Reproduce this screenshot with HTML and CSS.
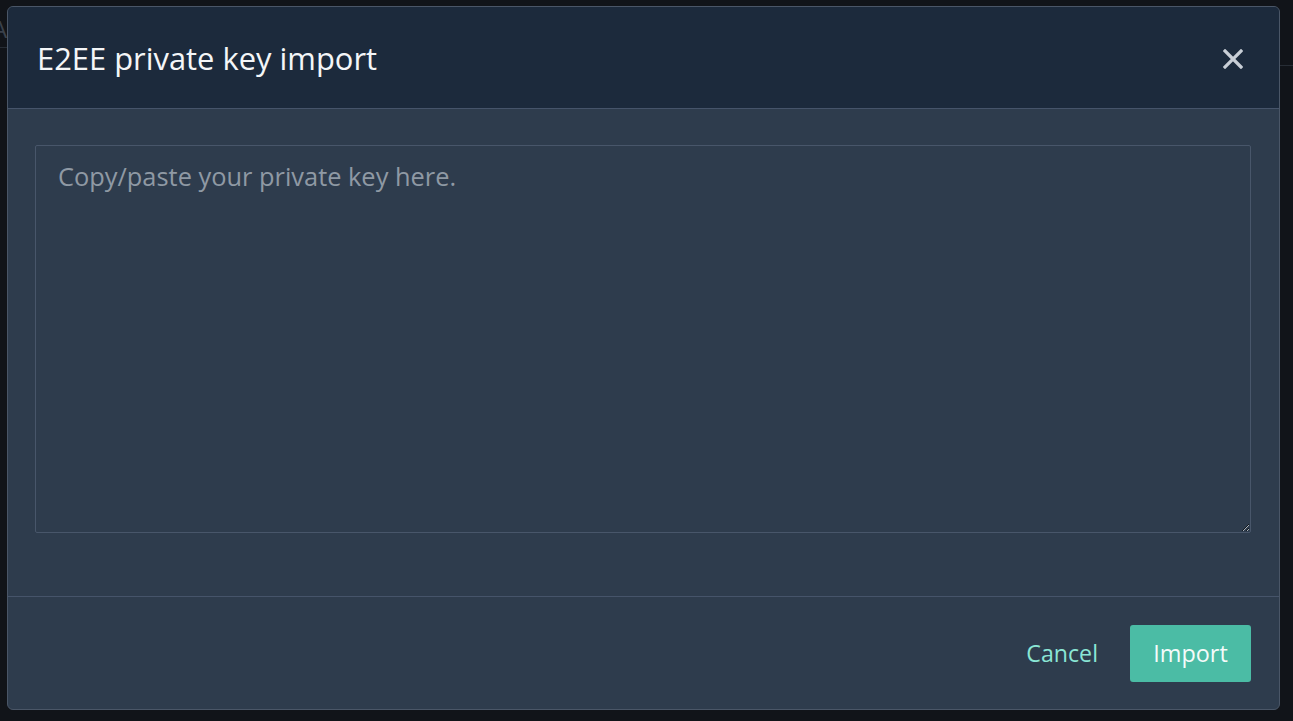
FILE: index.html
```html
<!DOCTYPE html>
<html>
<head>
<meta charset="utf-8">
<link rel="stylesheet" href="styles.css">
</head>
<body>
<div class="backdrop">
  <div class="bg-letter">A</div>
  <div class="bg-line-left"></div>
  <div class="bg-line-right"></div>
</div>
<div class="modal">
  <div class="modal-header">
    <h1 class="modal-title">E2EE private key import</h1>
    <button class="close" aria-label="Close">
      <svg width="20" height="20" viewBox="0 0 20 20"><path d="M2 2 L18 18 M18 2 L2 18" stroke="#c8ced6" stroke-width="3.2" stroke-linecap="square"/></svg>
    </button>
  </div>
  <div class="modal-body">
    <textarea class="key-input" placeholder="Copy/paste your private key here."></textarea>
  </div>
  <div class="modal-footer">
    <button class="btn-cancel">Cancel</button>
    <button class="btn-import">Import</button>
  </div>
</div>
</body>
</html>
```
FILE: styles.css
```css
html, body {
  margin: 0;
  padding: 0;
  height: 100%;
  overflow: hidden;
}
body {
  background: #111419;
  font-family: "Open Sans", "Noto Sans", sans-serif;
  position: relative;
}
.backdrop {
  position: absolute;
  inset: 0;
}
.bg-letter {
  position: absolute;
  left: -8px;
  top: 12px;
  font-size: 24px;
  color: #3a414b;
}
.bg-line-left {
  position: absolute;
  left: 0;
  top: 47px;
  width: 7px;
  height: 1px;
  background: #272d35;
}
.bg-line-right {
  position: absolute;
  right: 0;
  top: 65px;
  width: 13px;
  height: 1px;
  background: #272d35;
}
.modal {
  position: absolute;
  left: 7px;
  top: 6px;
  width: 1271px;
  height: 702px;
  border: 1px solid #4a5667;
  border-radius: 6px;
  background: #2e3c4d;
  display: flex;
  flex-direction: column;
  overflow: hidden;
}
.modal-header {
  height: 102px;
  flex: none;
  box-sizing: border-box;
  background: #1c2a3c;
  border-bottom: 1px solid #46546a;
  display: flex;
  align-items: center;
  justify-content: space-between;
  padding: 0 36px 0 29px;
}
.modal-title {
  margin: 0;
  font-weight: 400;
  font-size: 30.9px;
  color: #f4f6f8;
}
.close {
  background: none;
  border: none;
  padding: 0;
  width: 20px;
  height: 20px;
  margin-top: 2px;
  cursor: pointer;
}
.close svg { display: block; }
.modal-body {
  padding: 36px 27px 63px 27px;
  border-bottom: 1px solid #46546a;
}
.key-input {
  display: block;
  box-sizing: border-box;
  width: 1216px;
  height: 388px;
  margin: 0;
  background: #2e3c4d;
  border: 1px solid #48566a;
  border-radius: 2px;
  padding: 13px 22px;
  font-family: "Open Sans", "Noto Sans", sans-serif;
  font-size: 25.4px;
  color: #e6e9ed;
  resize: vertical;
  outline: none;
}
.key-input::placeholder {
  color: #8f99a4;
}
.modal-footer {
  flex: 1;
  display: flex;
  align-items: center;
  justify-content: flex-end;
  padding: 0 28px 0 0;
  gap: 32px;
}
.btn-cancel {
  background: none;
  border: none;
  font-family: "Open Sans", "Noto Sans", sans-serif;
  font-size: 23.2px;
  color: #8ae6d5;
  padding: 0;
  cursor: pointer;
}
.btn-import {
  width: 121px;
  height: 57px;
  background: #4bbca5;
  border: none;
  border-radius: 3px;
  font-family: "Open Sans", "Noto Sans", sans-serif;
  font-size: 23.4px;
  color: #f4fbfa;
  cursor: pointer;
}
```
